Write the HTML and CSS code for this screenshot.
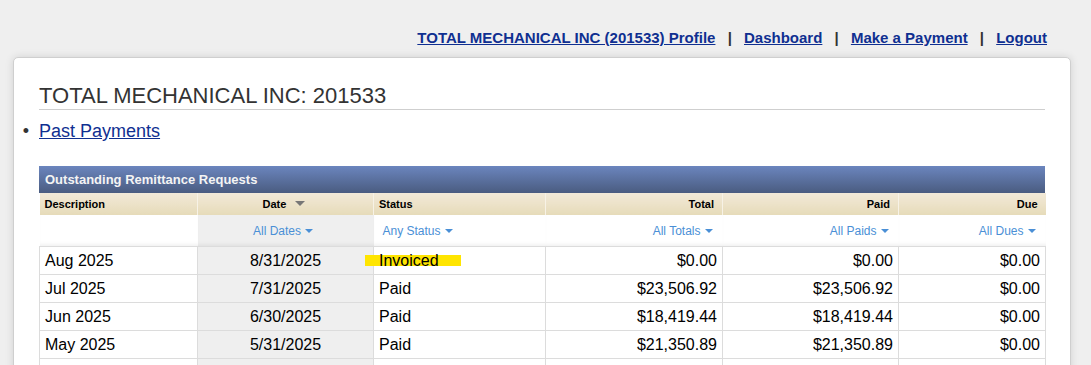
FILE: index.html
```html
<!doctype html>
<html lang="en-us">
  <head>
    <meta charset="utf-8">
    <title>TOTAL MECHANICAL INC: 201533</title>
    <link rel="stylesheet" href="styles.css">
  </head>
  <body>
    <div class="topnav">
      <a href="#">TOTAL MECHANICAL INC (201533) Profile</a>
      <span class="sep">|</span>
      <a href="#">Dashboard</a>
      <span class="sep">|</span>
      <a href="#">Make a Payment</a>
      <span class="sep">|</span>
      <a href="#">Logout</a>
    </div>

    <div class="card">
      <h1 class="page-title">TOTAL MECHANICAL INC: 201533</h1>
      <ul class="links">
        <li><a href="#">Past Payments</a></li>
      </ul>

      <div class="grid">
        <div class="grid-title">Outstanding Remittance Requests</div>
        <table class="grid-table">
          <colgroup>
            <col style="width:158px">
            <col style="width:176px">
            <col style="width:172px">
            <col style="width:177px">
            <col style="width:176px">
            <col style="width:147px">
          </colgroup>
          <thead>
            <tr class="head">
              <th class="left">Description</th>
              <th class="center sorted">Date <span class="sort-caret"></span></th>
              <th class="left">Status</th>
              <th class="right">Total</th>
              <th class="right">Paid</th>
              <th class="right">Due</th>
            </tr>
            <tr class="filters">
              <td></td>
              <td class="center sorted"><a href="#">All Dates<span class="caret"></span></a></td>
              <td class="left status-filter"><a href="#">Any Status<span class="caret"></span></a></td>
              <td class="right"><a href="#">All Totals<span class="caret"></span></a></td>
              <td class="right"><a href="#">All Paids<span class="caret"></span></a></td>
              <td class="right"><a href="#">All Dues<span class="caret"></span></a></td>
            </tr>
          </thead>
          <tbody>
            <tr>
              <td>Aug 2025</td>
              <td class="center sorted">8/31/2025</td>
              <td><span class="marked">Invoiced</span></td>
              <td class="right">$0.00</td>
              <td class="right">$0.00</td>
              <td class="right">$0.00</td>
            </tr>
            <tr>
              <td>Jul 2025</td>
              <td class="center sorted">7/31/2025</td>
              <td>Paid</td>
              <td class="right">$23,506.92</td>
              <td class="right">$23,506.92</td>
              <td class="right">$0.00</td>
            </tr>
            <tr>
              <td>Jun 2025</td>
              <td class="center sorted">6/30/2025</td>
              <td>Paid</td>
              <td class="right">$18,419.44</td>
              <td class="right">$18,419.44</td>
              <td class="right">$0.00</td>
            </tr>
            <tr>
              <td>May 2025</td>
              <td class="center sorted">5/31/2025</td>
              <td>Paid</td>
              <td class="right">$21,350.89</td>
              <td class="right">$21,350.89</td>
              <td class="right">$0.00</td>
            </tr>
            <tr>
              <td></td>
              <td class="sorted"></td>
              <td></td>
              <td></td>
              <td></td>
              <td></td>
            </tr>
          </tbody>
        </table>
      </div>
    </div>
  </body>
</html>
```

FILE: styles.css
```css
html, body {
  height: 100%;
  overflow: hidden;
}

body {
  font-family: "Liberation Sans", Arial, sans-serif;
  margin: 0;
  color: #000;
  background-color: #efefef;
}

a {
  color: #0f2f91;
}

.topnav {
  text-align: right;
  padding: 29px 44px 0 0;
  font-size: 15px;
  font-weight: bold;
  line-height: 18px;
}

.topnav .sep {
  color: #333;
  margin: 0 8px;
}

.card {
  margin: 10px 20px 0 13px;
  padding: 0 25px 40px 25px;
  background: #fff;
  border: 1px solid #cfcfcf;
  border-radius: 5px;
  box-shadow: 0 0 8px rgba(0, 0, 0, 0.12);
}

.page-title {
  margin: 25px 0 0;
  font-size: 22px;
  font-weight: normal;
  line-height: 26px;
  color: #333;
  border-bottom: 1px solid #cfcfcf;
}

.links {
  margin: 10px 0 0;
  padding: 0;
  font-size: 18px;
  line-height: 22px;
}

.links li::marker {
  content: "\2022\00a0\00a0";
  color: #333;
}

.grid {
  margin-top: 24px;
}

.grid-title {
  height: 27px;
  line-height: 27px;
  padding-left: 6px;
  font-size: 13px;
  font-weight: bold;
  color: #f4f4f4;
  background: linear-gradient(#6b85be, #4a5c80);
}

.grid-table {
  width: 1006px;
  table-layout: fixed;
  border-collapse: collapse;
}

.grid-table .left { text-align: left; }
.grid-table .center { text-align: center; }
.grid-table .right { text-align: right; }

.head th {
  height: 22px;
  padding: 0 8px 0 5px;
  font-size: 11px;
  font-weight: bold;
  background: linear-gradient(#f2e9d8, #e6dbb9);
  border-left: 1px solid #f7f2e6;
}

.head th:first-child {
  border-left: 0;
}

.sort-caret {
  display: inline-block;
  margin-left: 6px;
  vertical-align: 2px;
  border-left: 5px solid transparent;
  border-right: 5px solid transparent;
  border-top: 5px solid #777;
}

.filters td {
  height: 31px;
  padding: 0 10px 0 5px;
  font-size: 12px;
  background: #fff;
  border-bottom: 1px solid #dcdcdc;
  box-shadow: inset 0 -4px 4px -3px rgba(0, 0, 0, 0.08);
}

.filters td.status-filter {
  padding-left: 9px;
}

.filters td.sorted {
  background: #efefef;
}

.filters a {
  color: #4a8fd6;
  text-decoration: none;
}

.caret {
  display: inline-block;
  margin-left: 4px;
  vertical-align: 2px;
  border-left: 4px solid transparent;
  border-right: 4px solid transparent;
  border-top: 4px solid #4a8fd6;
}

tbody td {
  height: 27px;
  padding: 0 5px;
  font-size: 16px;
  border: 1px solid #dcdcdc;
  border-top: 0;
  white-space: nowrap;
}

tbody td.sorted {
  background: #efefef;
}

.marked {
  position: relative;
  z-index: 0;
}

.marked::before {
  content: "";
  position: absolute;
  z-index: -1;
  left: -14px;
  right: -22px;
  top: 3px;
  height: 11px;
  background: #ffe500;
}
```
